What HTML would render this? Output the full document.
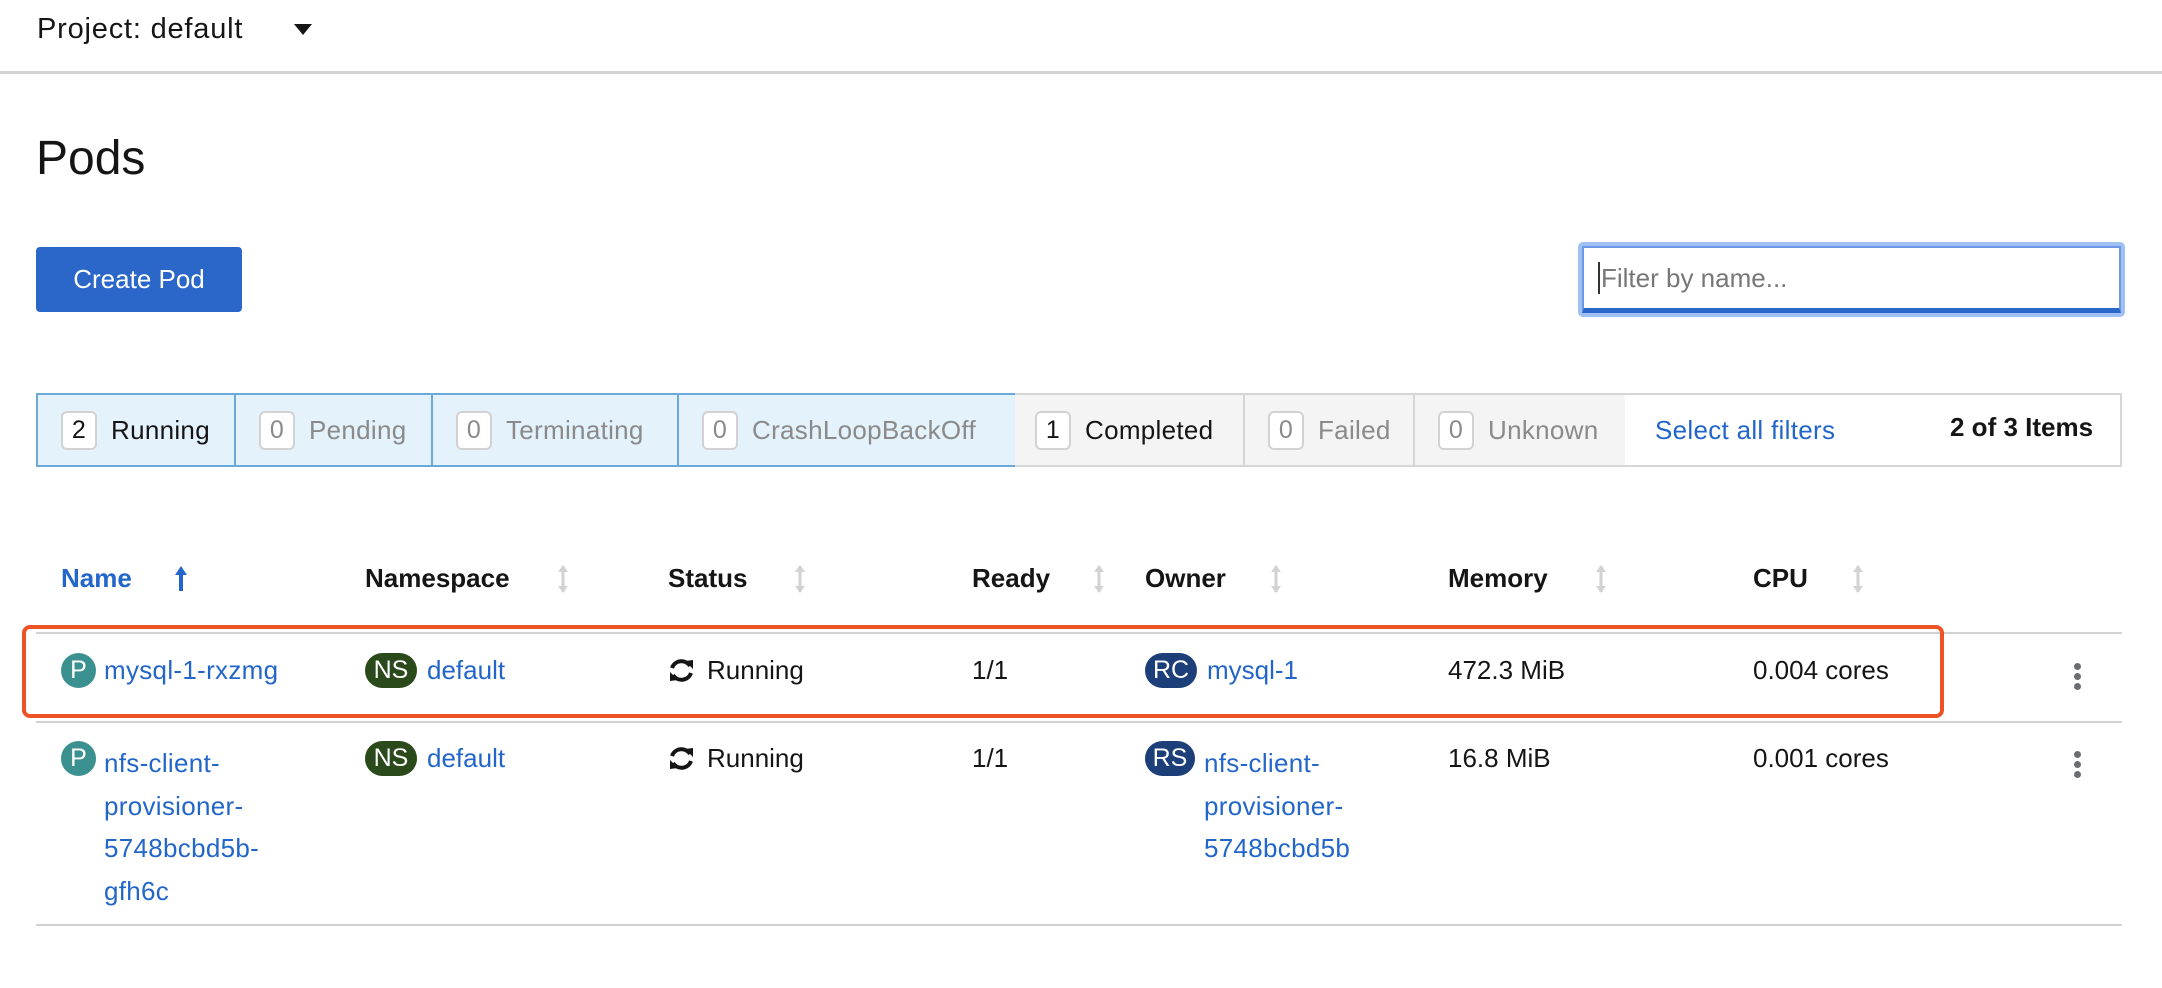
<!DOCTYPE html>
<html><head><meta charset="utf-8"><style>
*{margin:0;padding:0;box-sizing:border-box}
body{width:2162px;height:988px;background:#fff;font-family:"Liberation Sans",sans-serif;color:#151515;position:relative;overflow:hidden;font-size:26px}
.a{position:absolute;white-space:nowrap}
.link{color:#2366c9}
.hr{position:absolute;height:2px;background:#d2d2d2}
.seg{position:absolute;top:393px;height:74px;display:flex;align-items:center;padding-left:23px;letter-spacing:0.3px}
.blue{background:#e4f2fc;border:2px solid #6aa9d8}
.gray{background:#f4f4f4;border:2px solid #d6d6d6}
.cnt{display:inline-block;width:36px;height:39px;border:2px solid #d2d2d2;border-radius:6px;background:#fff;text-align:center;line-height:35px;margin-right:14px;font-size:25px}
.dim{color:#8a8a8a}
.th{position:absolute;top:563px;font-weight:bold;font-size:26px}
.srt{position:absolute;top:563px;width:12px;height:32px}
.badge{position:absolute;height:35px;border-radius:18px;color:#fff;text-align:center;line-height:35px;font-size:25px}
.kb{position:absolute;width:7px}
.kb i{display:block;width:7px;height:7px;border-radius:50%;background:#6a6e73;margin-bottom:3px}
</style></head><body>
<div class="a" style="left:37px;top:11px;font-size:29px;line-height:36px;letter-spacing:0.8px">Project: default</div>
<svg class="a" style="left:294px;top:24px" width="18" height="12"><polygon points="0,0 18,0 9,11" fill="#151515"/></svg>
<div class="hr" style="left:0;top:71px;width:2162px;height:3px"></div>
<div class="a" style="left:36px;top:130px;font-size:48px;line-height:58px">Pods</div>
<div class="a" style="left:36px;top:247px;width:206px;height:65px;background:#2a67c9;border-radius:4px;color:#fff;text-align:center;line-height:65px;font-size:26px">Create Pod</div>
<div class="a" style="left:1578px;top:242px;width:547px;height:75px;border:4px solid #9fc0f2;border-radius:5px"></div>
<div class="a" style="left:1582px;top:246px;width:539px;height:67px;border:2px solid #6d97e6;border-bottom:5px solid #2a67c9;background:#fff"></div>
<div class="a" style="left:1598px;top:262px;width:2px;height:32px;background:#333"></div>
<div class="a" style="left:1601px;top:260px;color:#777;font-size:26px;line-height:36px">Filter by name...</div>

<div class="seg blue" style="left:36px;width:200px"><span class="cnt">2</span>Running</div>
<div class="seg blue" style="left:234px;width:199px"><span class="cnt dim">0</span><span class="dim">Pending</span></div>
<div class="seg blue" style="left:431px;width:248px"><span class="cnt dim">0</span><span class="dim">Terminating</span></div>
<div class="seg blue" style="left:677px;width:340px"><span class="cnt dim">0</span><span class="dim">CrashLoopBackOff</span></div>
<div class="seg gray" style="left:1015px;width:230px;border-left:none;padding-left:20px"><span class="cnt">1</span>Completed</div>
<div class="seg gray" style="left:1243px;width:172px"><span class="cnt dim">0</span><span class="dim">Failed</span></div>
<div class="seg gray" style="left:1413px;width:214px"><span class="cnt dim">0</span><span class="dim">Unknown</span></div>
<div class="seg" style="left:1625px;width:497px;border:2px solid #d6d6d6;border-left:none;background:#fff;padding-left:30px"><span class="link">Select all filters</span></div>
<div class="a" style="left:1950px;top:410px;font-weight:bold;font-size:26px;line-height:34px">2 of 3 Items</div>

<div class="th link" style="left:61px">Name</div>
<svg class="a" style="left:174px;top:565px" width="14" height="28"><path d="M7 4 L7 26" stroke="#2366c9" stroke-width="4" fill="none"/><path d="M1 10 L7 1 L13 10Z" fill="#2366c9"/></svg>
<div class="th" style="left:365px">Namespace</div>
<div class="th" style="left:668px">Status</div>
<div class="th" style="left:972px">Ready</div>
<div class="th" style="left:1145px">Owner</div>
<div class="th" style="left:1448px">Memory</div>
<div class="th" style="left:1753px">CPU</div>
<svg width="0" height="0" style="position:absolute"><defs><g id="s"><path d="M6 3 L6 29" stroke="#d2d2d2" stroke-width="3"/><path d="M1 9 L6 2 L11 9Z M1 23 L6 30 L11 23Z" fill="#d2d2d2"/></g></defs></svg>
<svg class="srt" style="left:557px"><use href="#s"/></svg>
<svg class="srt" style="left:794px"><use href="#s"/></svg>
<svg class="srt" style="left:1093px"><use href="#s"/></svg>
<svg class="srt" style="left:1270px"><use href="#s"/></svg>
<svg class="srt" style="left:1595px"><use href="#s"/></svg>
<svg class="srt" style="left:1852px"><use href="#s"/></svg>

<div class="hr" style="left:36px;top:632px;width:2086px"></div>
<div class="hr" style="left:36px;top:721px;width:2086px"></div>
<div class="hr" style="left:36px;top:924px;width:2086px"></div>
<div class="a" style="left:22px;top:625px;width:1922px;height:93px;border:4px solid #ee5326;border-radius:8px"></div>

<svg width="0" height="0" style="position:absolute"><defs><g id="r"><path d="M22 9 A10 10 0 0 0 4 11" stroke="#151515" stroke-width="4" fill="none"/><path d="M17 4 L25 3 L25 12Z" fill="#151515"/><path d="M5 18 A10 10 0 0 0 23 16" stroke="#151515" stroke-width="4" fill="none"/><path d="M10 23 L2 24 L2 15Z" fill="#151515"/></g></defs></svg>

<!-- row1 -->
<div class="badge" style="left:61px;top:653px;width:35px;background:#3b918f">P</div>
<div class="a link" style="left:104px;top:654px;line-height:32px;letter-spacing:0.3px">mysql-1-rxzmg</div>
<div class="badge" style="left:365px;top:653px;width:52px;background:#2b4a1c">NS</div>
<div class="a link" style="left:427px;top:654px;line-height:32px">default</div>
<svg class="a" style="left:668px;top:657px" width="27" height="27"><use href="#r"/></svg>
<div class="a" style="left:707px;top:654px;line-height:32px">Running</div>
<div class="a" style="left:972px;top:654px;line-height:32px">1/1</div>
<div class="badge" style="left:1145px;top:653px;width:52px;background:#1d3f79">RC</div>
<div class="a link" style="left:1207px;top:654px;line-height:32px">mysql-1</div>
<div class="a" style="left:1448px;top:654px;line-height:32px">472.3 MiB</div>
<div class="a" style="left:1753px;top:654px;line-height:32px">0.004 cores</div>
<div class="kb" style="left:2074px;top:663px"><i></i><i></i><i></i></div>

<!-- row2 -->
<div class="badge" style="left:61px;top:741px;width:35px;background:#3b918f">P</div>
<div class="a link" style="left:104px;top:742px;line-height:42.5px;letter-spacing:0.3px">nfs-client-<br>provisioner-<br>5748bcbd5b-<br>gfh6c</div>
<div class="badge" style="left:365px;top:741px;width:52px;background:#2b4a1c">NS</div>
<div class="a link" style="left:427px;top:742px;line-height:32px">default</div>
<svg class="a" style="left:668px;top:745px" width="27" height="27"><use href="#r"/></svg>
<div class="a" style="left:707px;top:742px;line-height:32px">Running</div>
<div class="a" style="left:972px;top:742px;line-height:32px">1/1</div>
<div class="badge" style="left:1145px;top:741px;width:50px;background:#1d3f79">RS</div>
<div class="a link" style="left:1204px;top:742px;line-height:42.5px;letter-spacing:0.3px">nfs-client-<br>provisioner-<br>5748bcbd5b</div>
<div class="a" style="left:1448px;top:742px;line-height:32px">16.8 MiB</div>
<div class="a" style="left:1753px;top:742px;line-height:32px">0.001 cores</div>
<div class="kb" style="left:2074px;top:751px"><i></i><i></i><i></i></div>
</body></html>
